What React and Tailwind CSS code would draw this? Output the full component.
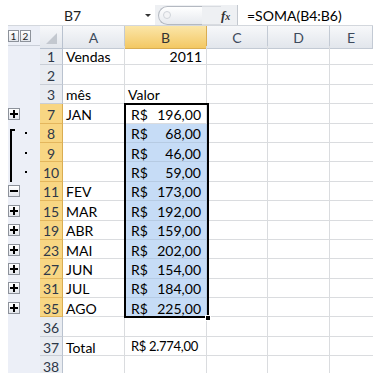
import React from 'react';

const font = { fontFamily: 'Lato, "Open Sans", sans-serif' };

const rows = [
  { n: 1, a: 'Vendas', b: '2011', align: 'right' },
  { n: 2 },
  { n: 3, a: 'mês', b: 'Valor', align: 'left' },
  { n: 7, a: 'JAN', v: '196,00', sel: true, active: true, ol: 'plus' },
  { n: 8, v: '68,00', sel: true, ol: 'dot', br: 'top' },
  { n: 9, v: '46,00', sel: true, ol: 'dot', br: 'mid' },
  { n: 10, v: '59,00', sel: true, ol: 'dot', br: 'mid' },
  { n: 11, a: 'FEV', v: '173,00', sel: true, ol: 'minus' },
  { n: 15, a: 'MAR', v: '192,00', sel: true, ol: 'plus' },
  { n: 19, a: 'ABR', v: '159,00', sel: true, ol: 'plus' },
  { n: 23, a: 'MAI', v: '202,00', sel: true, ol: 'plus' },
  { n: 27, a: 'JUN', v: '154,00', sel: true, ol: 'plus' },
  { n: 31, a: 'JUL', v: '184,00', sel: true, ol: 'plus' },
  { n: 35, a: 'AGO', v: '225,00', sel: true, ol: 'plus' },
  { n: 36 },
  { n: 37, a: 'Total', v: '2.774,00', tot: true },
  { n: 38 },
];

const cols = 'grid grid-cols-[23px_62px_82px_61px_62px_1fr]';

function OutlineButton({ minus }) {
  return (
    <div className="w-[12px] h-[12px] border border-[#8d929b] bg-gradient-to-b from-white to-[#e3e6ec] flex items-center justify-center">
      <svg width="8" height="8" viewBox="0 0 8 8">
        <rect x="0" y="3" width="8" height="2" fill="#000" />
        {!minus && <rect x="3" y="0" width="2" height="8" fill="#000" />}
      </svg>
    </div>
  );
}

function OutlineCell({ r }) {
  return (
    <div className="relative h-[19.4px] flex items-center">
      {r.br === 'top' && (
        <div className="absolute left-[2px] top-[5px] bottom-0 w-[5px] border-l-2 border-t-2 border-black" />
      )}
      {r.br === 'mid' && <div className="absolute left-[2px] top-0 bottom-0 border-l-2 border-black" />}
      {(r.ol === 'plus' || r.ol === 'minus') && <OutlineButton minus={r.ol === 'minus'} />}
      {r.ol === 'dot' && <div className="ml-[17px] w-[2px] h-[2px] bg-black" />}
    </div>
  );
}

function Cell({ children, className = '' }) {
  return (
    <div className={`h-[19.4px] border-r border-b flex items-center pt-[2px] overflow-hidden whitespace-nowrap ${className}`}>
      {children}
    </div>
  );
}

export default function App() {
  return (
    <div className="w-[385px] h-[379px] bg-white overflow-hidden text-black" style={font}>
      <div className="ml-[8px] mt-[5px] w-[365px] h-[368px] overflow-hidden flex flex-col">
        {/* formula bar */}
        <div className="h-[2px] bg-[#c9cdd3]" />
        <div className="h-[21px] flex border-b border-[#d3d7dd]">
          <div className="w-[147px] flex items-center bg-white">
            <div className="w-[129px] text-center text-[14px] text-[#222]">B7</div>
            <svg width="8" height="5" viewBox="0 0 8 5" className="ml-[7px]">
              <path d="M1 1 L7 1 L4 4 Z" fill="#333" />
            </svg>
          </div>
          <div className="w-[82px] flex items-center bg-[#eef0f3]">
            <div className="ml-[3px] h-[19px] w-[44px] rounded-l-full border border-r-0 border-[#b4b9c1] bg-gradient-to-b from-white to-[#e6e9ee] flex items-center">
              <div className="ml-[4px] w-[8px] h-[8px] rounded-full border border-[#d0d4da] bg-[#f3f4f6]" />
            </div>
            <div className="flex-1 h-[19px] border-y border-[#d8dbe0]" />
            <div
              className="w-[16px] text-[13px] italic font-bold text-[#333] leading-none pr-[2px]"
              style={{ fontFamily: '"Liberation Serif", serif' }}
            >
              f<span className="text-[10px]">x</span>
            </div>
          </div>
          <div className="flex-1 border-l border-[#c3c8cf] bg-white flex items-center pl-[9px] text-[14px]">
            =SOMA(B4:B6)
          </div>
        </div>
        <div className="h-[3px] bg-[#eceef2]" />

        {/* sheet */}
        <div className="flex flex-1">
          {/* outline pane */}
          <div className="w-[32px] bg-[#eceff7] flex flex-col">
            <div className="h-[20px] flex items-center pt-[1px] border-b border-[#c9ced8]">
              {['1', '2'].map((t) => (
                <div
                  key={t}
                  className="w-[11px] h-[12px] mr-[1px] border border-[#8d929b] bg-gradient-to-b from-white to-[#e3e6ec] text-[10px] leading-[10px] text-center text-[#222]"
                >
                  {t}
                </div>
              ))}
            </div>
            {rows.map((r) => (
              <OutlineCell key={r.n} r={r} />
            ))}
          </div>

          {/* grid */}
          <div className="relative flex-1">
            <div className={`${cols} h-[20px] text-[14px] text-[#3d4a5c]`}>
              <div className="border-r border-b border-[#b9c2cf] bg-gradient-to-b from-[#f7f8fa] to-[#e2e6ec] relative">
                <svg width="12" height="12" viewBox="0 0 12 12" className="absolute right-[4px] bottom-[3px]">
                  <path d="M11 0 L11 11 L0 11 Z" fill="#c3c8cf" />
                </svg>
              </div>
              {['A', 'B', 'C', 'D', 'E'].map((c) => (
                <div
                  key={c}
                  className={`border-r border-b flex items-center justify-center pt-[1px] ${
                    c === 'B'
                      ? 'bg-gradient-to-b from-[#fbe6a8] to-[#f3c862] border-[#d9ad52] text-[#333]'
                      : 'bg-gradient-to-b from-[#f7f8fa] to-[#e2e6ec] border-[#c3cad4]'
                  }`}
                >
                  {c}
                </div>
              ))}
            </div>

            {rows.map((r) => (
              <div key={r.n} className={`${cols} text-[14px]`}>
                <Cell
                  className={`justify-center text-[#2e3848] ${
                    r.sel
                      ? 'bg-[#f8d683] border-[#e3b65d] border-r-[#d9ad52]'
                      : 'bg-[#e9ecf1] border-[#c9ced6] border-r-[#b9c2cf]'
                  }`}
                >
                  {r.n}
                </Cell>
                <Cell className="border-[#dadcdf] pl-[3px]">{r.a}</Cell>
                <Cell
                  className={`${
                    r.sel && !r.active ? 'bg-[#c6dcf6] border-b-[#b6cbe3] border-r-[#b6cbe3]' : 'border-[#dadcdf]'
                  } ${r.align === 'right' ? 'justify-end pr-[4px]' : ''} ${r.align === 'left' ? 'pl-[3px]' : ''} ${
                    r.v
                      ? r.tot
                        ? 'gap-[3px] pl-[6px] text-[13px] tracking-[-0.3px]'
                        : 'justify-between pl-[6px] pr-[5px]'
                      : ''
                  }`}
                >
                  {r.v ? (
                    <>
                      <span>R$</span>
                      <span>{r.v}</span>
                    </>
                  ) : (
                    r.b
                  )}
                </Cell>
                <Cell className="border-[#dadcdf]" />
                <Cell className="border-[#dadcdf]" />
                <Cell className="border-[#dadcdf] border-r-0" />
              </div>
            ))}

            {/* selection B7:B35 */}
            <div className="absolute left-[84px] top-[77.2px] w-[85px] h-[215px] border-2 border-black pointer-events-none" />
            <div className="absolute left-[165px] top-[289px] w-[6px] h-[6px] bg-black border border-white pointer-events-none" />
          </div>
        </div>
      </div>
    </div>
  );
}
